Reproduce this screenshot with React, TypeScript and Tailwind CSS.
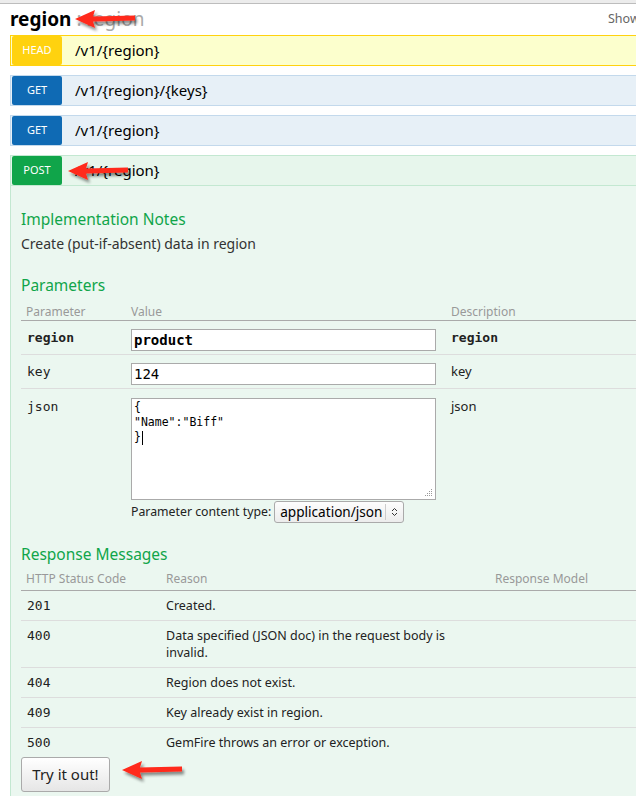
import React from "react";

function Arrow({ className }: { className: string }) {
  return (
    <svg className={className} width="80" height="34" viewBox="0 0 80 34">
      <defs>
        <filter id="sh" x="-20%" y="-40%" width="150%" height="200%">
          <feGaussianBlur in="SourceAlpha" stdDeviation="1.6" />
          <feOffset dx="2" dy="3" result="b" />
          <feComponentTransfer>
            <feFuncA type="linear" slope="0.45" />
          </feComponentTransfer>
          <feMerge>
            <feMergeNode />
            <feMergeNode in="SourceGraphic" />
          </feMerge>
        </filter>
      </defs>
      <g filter="url(#sh)">
        <path d="M4 14 L24 5 L22 11.5 L64 10.5 L64 15.5 L22 16.5 L24 23 Z" fill="#ff2a1a" />
      </g>
    </svg>
  );
}

function OpBar({
  method,
  path,
  badge,
  bar,
  border,
}: {
  method: string;
  path: string;
  badge: string;
  bar: string;
  border: string;
}) {
  return (
    <div className={`flex h-[31px] items-center border ${bar} ${border}`}>
      <div
        className={`ml-px flex h-[29px] w-[50px] items-center justify-center rounded-[2px] text-[11px] text-white ${badge}`}
      >
        {method}
      </div>
      <div className="ml-[13px] text-[15px] text-[#000]">{path}</div>
    </div>
  );
}

export default function App() {
  const mono = "font-['DejaVu_Sans_Mono',monospace]";
  return (
    <div className="relative h-[796px] w-[636px] overflow-hidden bg-white font-['Noto_Sans',sans-serif] text-[#333]">
      <div className="h-[4px] border-b border-[#bdbdbd] bg-[#ececec]" />
      <div className="flex h-[30px] items-center justify-between pl-[10px]">
        <div className="flex items-baseline text-[19px] leading-none">
          <span className="font-bold text-black">region</span>
          <span className="ml-[5px] text-[#aaa]">: region</span>
        </div>
        <div className="w-[28px] whitespace-nowrap text-[12.5px] text-[#666]">Show</div>
      </div>

      <div className="w-[680px] pl-[10px]">
        <div className="mt-[1px] flex flex-col gap-[9px]">
          <OpBar method="HEAD" path="/v1/{region}" badge="bg-[#ffd20f]" bar="bg-[#fcffcd]" border="border-[#ffd20f]" />
          <OpBar method="GET" path="/v1/{region}/{keys}" badge="bg-[#0f6ab4]" bar="bg-[#e7f0f7]" border="border-[#c3d9ec]" />
          <OpBar method="GET" path="/v1/{region}" badge="bg-[#0f6ab4]" bar="bg-[#e7f0f7]" border="border-[#c3d9ec]" />
          <div>
            <OpBar method="POST" path="/v1/{region}" badge="bg-[#10a54a]" bar="bg-[#e7f6ec]" border="border-[#c3e8d1]" />
            <div className="border-x border-b border-[#c3e8d1] bg-[#ebf7f0] px-[10px] pb-[20px] pt-[23px]">
              <h4 className="text-[15.5px] leading-[20px] text-[#10a54a]">Implementation Notes</h4>
              <p className="mt-[5px] text-[14px] leading-[19px] text-[#333]">Create (put-if-absent) data in region</p>

              <h4 className="mt-[22px] text-[15.5px] leading-[20px] text-[#10a54a]">Parameters</h4>
              <table className="mt-[9px] w-[620px] table-fixed border-collapse text-[12px]">
                <thead>
                  <tr className="border-b border-[#aaa] text-left leading-[16px] text-[#999]">
                    <th className="w-[105px] px-[5px] pb-0 font-normal">Parameter</th>
                    <th className="w-[320px] px-[5px] pb-0 font-normal">Value</th>
                    <th className="px-[5px] pb-0 font-normal">Description</th>
                  </tr>
                </thead>
                <tbody>
                  <tr className="border-b border-[#ddd] align-top">
                    <td className={`${mono} px-[6px] pt-[7px] text-[13px] font-bold text-[#222]`}>region</td>
                    <td className="px-[5px] pt-[8px] pb-[3px]">
                      <div className={`${mono} h-[22px] w-[305px] border border-[#aaa] bg-white pl-[2px] text-[14px] font-bold leading-[20px] text-black`}>
                        product
                      </div>
                    </td>
                    <td className={`${mono} px-[5px] pt-[7px] text-[13px] font-bold text-[#222]`}>region</td>
                  </tr>
                  <tr className="border-b border-[#ddd] align-top">
                    <td className={`${mono} px-[6px] pt-[7px] text-[13px] text-[#222]`}>key</td>
                    <td className="px-[5px] pt-[8px] pb-[3px]">
                      <div className={`${mono} h-[22px] w-[305px] border border-[#aaa] bg-white pl-[2px] text-[14px] leading-[20px] text-black`}>
                        124
                      </div>
                    </td>
                    <td className="px-[5px] pt-[7px] text-[13px] text-[#222]">key</td>
                  </tr>
                  <tr className="align-top">
                    <td className={`${mono} px-[6px] pt-[8px] text-[13px] text-[#222]`}>json</td>
                    <td className="px-[5px] pt-[9px]">
                      <div className={`${mono} relative h-[102px] w-[305px] border border-[#aaa] bg-white pl-[2px] pt-[1px] text-[11.5px] leading-[15px] text-black`}>
                        <div>{"{"}</div>
                        <div>"Name":"Biff"</div>
                        <div className="flex items-center">
                          {"}"}
                          <span className="ml-px inline-block h-[14px] w-px bg-black" />
                        </div>
                        <svg className="absolute bottom-[2px] right-[2px]" width="9" height="9" viewBox="0 0 9 9">
                          <g fill="#999">
                            <rect x="7" y="1" width="1" height="1" />
                            <rect x="5" y="3" width="1" height="1" />
                            <rect x="7" y="3" width="1" height="1" />
                            <rect x="3" y="5" width="1" height="1" />
                            <rect x="5" y="5" width="1" height="1" />
                            <rect x="7" y="5" width="1" height="1" />
                            <rect x="1" y="7" width="1" height="1" />
                            <rect x="3" y="7" width="1" height="1" />
                            <rect x="5" y="7" width="1" height="1" />
                            <rect x="7" y="7" width="1" height="1" />
                          </g>
                        </svg>
                      </div>
                      <div className="mt-[1px] flex items-center text-[12.3px] text-[#222]">
                        <span>Parameter content type:</span>
                        <div className="ml-[3px] flex h-[22px] items-center rounded-[3px] border border-[#aaa] bg-gradient-to-b from-[#fdfdfd] to-[#ececec] pl-[5px] text-[13.6px] text-black">
                          application/json
                          <span className="ml-[3px] flex h-[16px] w-[18px] items-center justify-center border-l border-[#ccc]">
                            <svg width="7" height="10" viewBox="0 0 7 10">
                              <path d="M1 4 L3.5 1.5 L6 4 M1 6 L3.5 8.5 L6 6" stroke="#333" strokeWidth="1" fill="none" />
                            </svg>
                          </span>
                        </div>
                      </div>
                    </td>
                    <td className="px-[5px] pt-[8px] text-[13px] text-[#222]">json</td>
                  </tr>
                </tbody>
              </table>

              <h4 className="mt-[21px] text-[15.5px] leading-[20px] text-[#10a54a]">Response Messages</h4>
              <table className="mt-[7px] w-[620px] table-fixed border-collapse text-[12.5px]">
                <thead>
                  <tr className="border-b border-[#aaa] text-left text-[12px] leading-[16px] text-[#999]">
                    <th className="w-[140px] px-[5px] pb-[3px] font-normal">HTTP Status Code</th>
                    <th className="w-[329px] px-[5px] pb-[3px] font-normal">Reason</th>
                    <th className="px-[5px] pb-[3px] font-normal">Response Model</th>
                  </tr>
                </thead>
                <tbody className="text-[#222]">
                  {[
                    ["201", "Created."],
                    ["400", "Data specified (JSON doc) in the request body is invalid."],
                    ["404", "Region does not exist."],
                    ["409", "Key already exist in region."],
                    ["500", "GemFire throws an error or exception."],
                  ].map(([c, r], i) => (
                    <tr key={c} className={`align-top ${i < 4 ? "border-b border-[#ddd]" : ""}`}>
                      <td className={`${mono} px-[6px] py-[6px] text-[13px] leading-[17px]`}>{c}</td>
                      <td className="py-[6px] pl-[5px] pr-[30px] leading-[17px]">{r}</td>
                      <td />
                    </tr>
                  ))}
                </tbody>
              </table>
              <button className="mt-0 h-[35px] w-[89px] rounded-[3px] border border-[#aaa] bg-gradient-to-b from-[#fff] to-[#e6e6e6] text-[15px] text-[#222]">
                Try it out!
              </button>
            </div>
          </div>
        </div>
      </div>

      <Arrow className="absolute left-[71px] top-[5px]" />
      <Arrow className="absolute left-[64px] top-[157px]" />
      <Arrow className="absolute left-[118px] top-[756px]" />
    </div>
  );
}
